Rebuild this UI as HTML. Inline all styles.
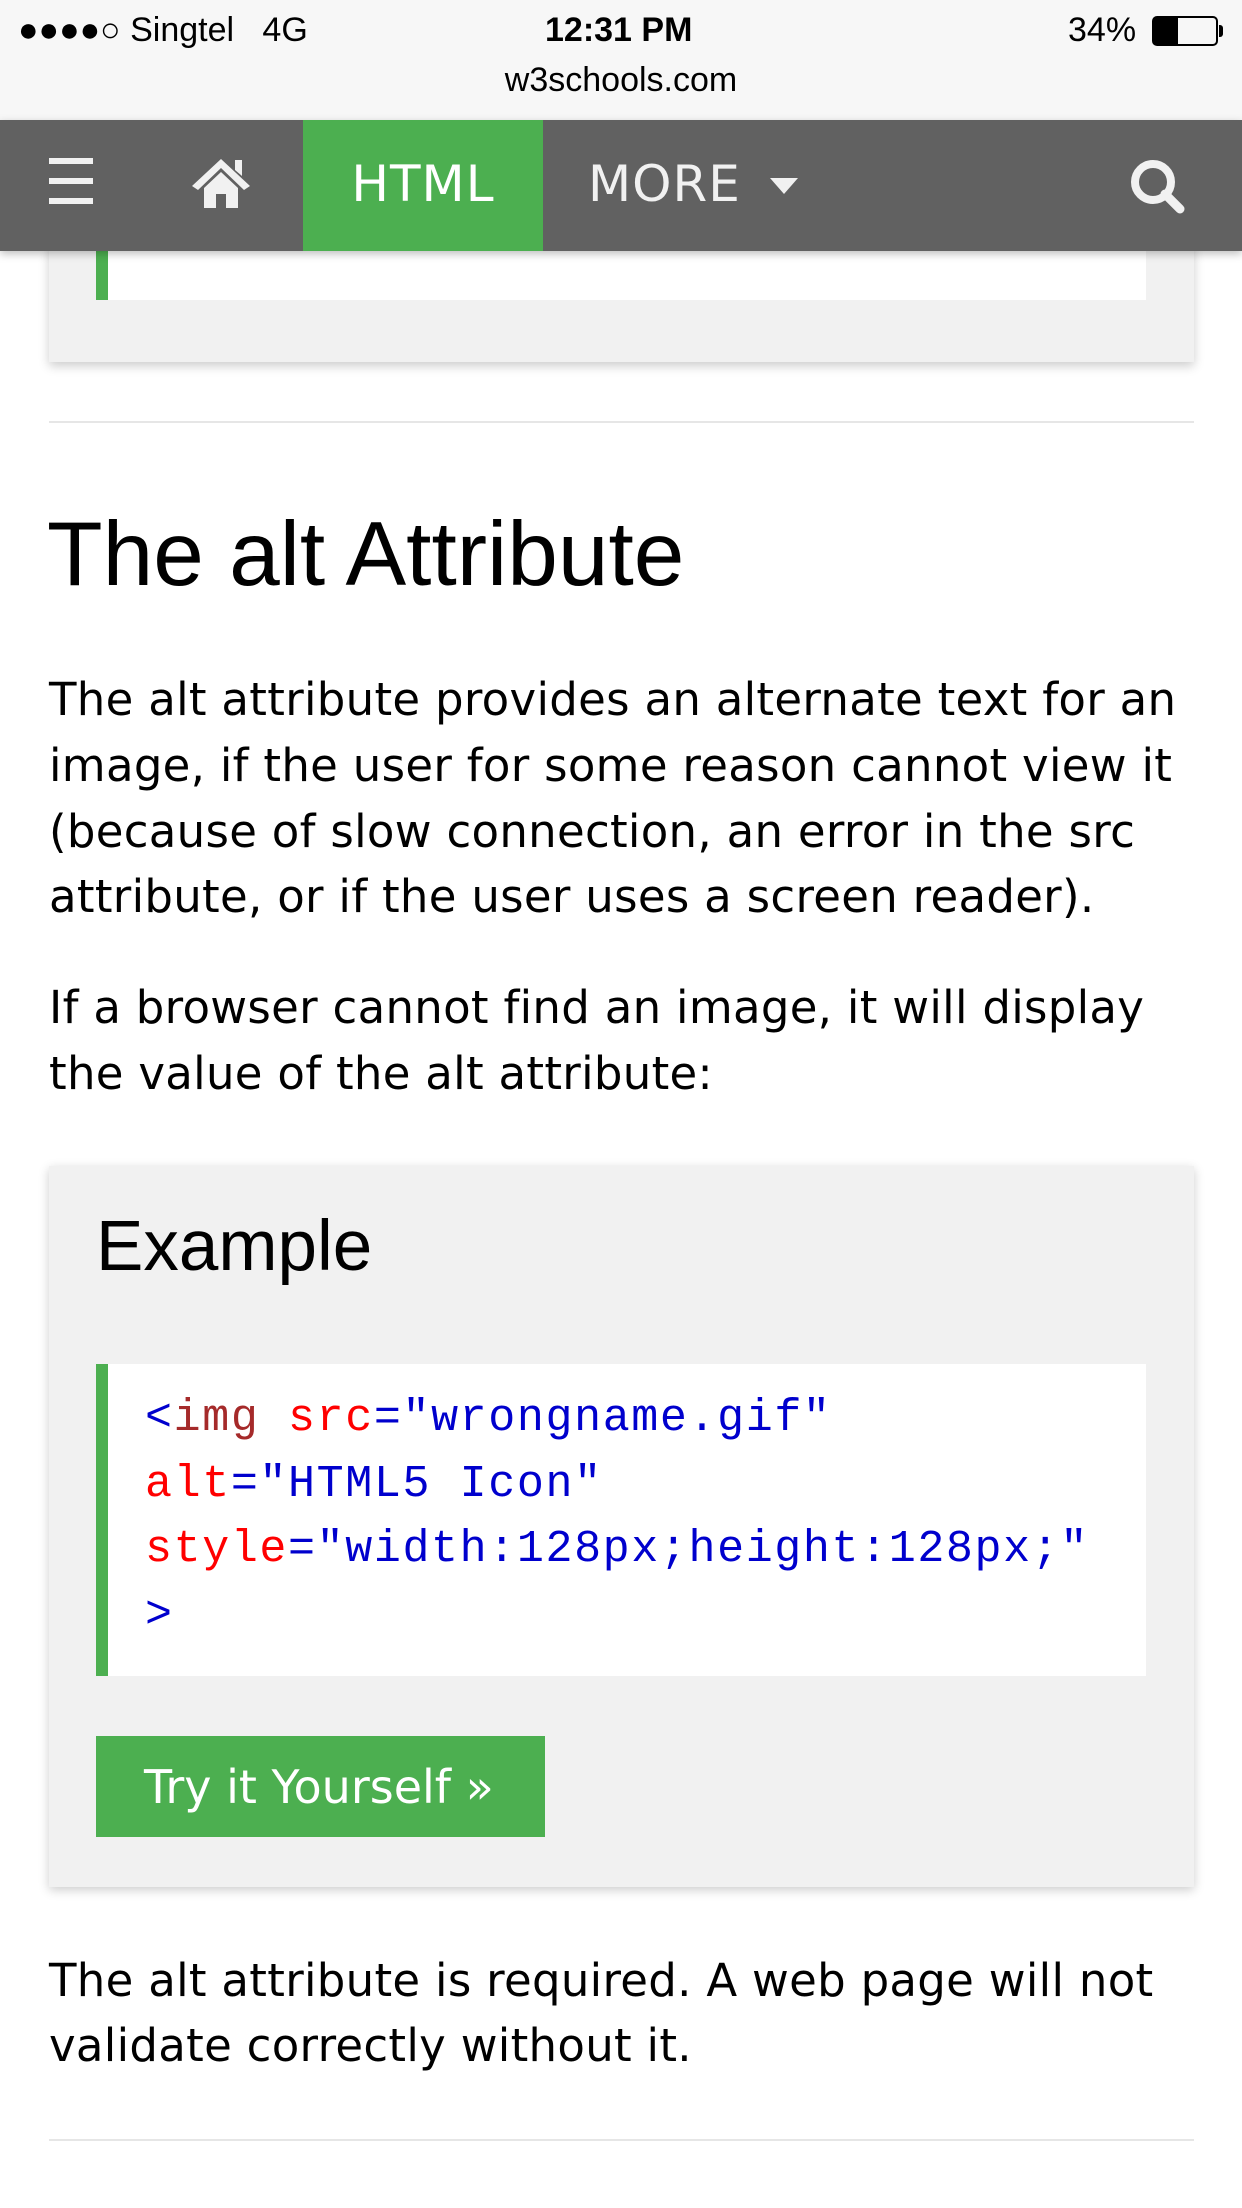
<!DOCTYPE html>
<html><head><meta charset="utf-8"><style>
*{margin:0;padding:0;box-sizing:border-box}
body{width:1242px;height:2208px;background:#fff;position:relative;overflow:hidden;font-family:"DejaVu Sans","Liberation Sans",sans-serif;color:#000}
.a{position:absolute;white-space:nowrap}
.sb{font-family:"Liberation Sans",sans-serif;font-size:34px}
.p{font-size:45px;line-height:66px;left:49px;letter-spacing:0.3px}
.code{font-family:"Liberation Mono",monospace;font-size:45px;line-height:65.5px;color:mediumblue;letter-spacing:1.6px}
.r{color:red}.br{color:brown}
</style></head><body>
<!-- status bar -->
<div class="a" style="left:0;top:0;width:1242px;height:120px;background:#f7f7f7"></div>
<div class="a sb" style="left:18px;top:11px">●●●●○ Singtel&nbsp;&nbsp; 4G</div>
<div class="a sb" style="left:545px;top:11px;font-weight:bold">12:31 PM</div>
<div class="a sb" style="left:1068px;top:11px">34%</div>
<div class="a" style="left:1152px;top:16px;width:66px;height:30px;border:2px solid #000;border-radius:5px"><div style="width:24px;height:100%;background:#000"></div></div>
<div class="a" style="left:1219px;top:25px;width:4px;height:12px;background:#000;border-radius:0 3px 3px 0"></div>
<div class="a sb" style="left:0;width:1242px;text-align:center;top:61px">w3schools.com</div>

<!-- top card remnant -->
<div class="a" style="left:49px;top:240px;width:1145px;height:122px;background:#f1f1f1;box-shadow:0 4px 10px rgba(0,0,0,.2)"></div>
<div class="a" style="left:96px;top:240px;width:1050px;height:60px;background:#fff;border-left:12px solid #4caf50"></div>

<!-- navbar -->
<div class="a" style="left:0;top:120px;width:1242px;height:131px;background:#616161;box-shadow:0 3px 8px rgba(0,0,0,.25)"></div>
<div class="a" style="left:49px;top:158px;width:44px;height:6px;background:#f1f1f1"></div>
<div class="a" style="left:49px;top:178px;width:44px;height:6px;background:#f1f1f1"></div>
<div class="a" style="left:49px;top:198px;width:44px;height:6px;background:#f1f1f1"></div>
<svg class="a" style="left:190px;top:156px" width="62" height="52" viewBox="0 0 62 52"><path d="M31 3 L2 30 L8 34 L31 12 L54 34 L60 30 Z" fill="#f1f1f1"/><path d="M45 4 h7 v16 l-7 -6z" fill="#f1f1f1"/><path d="M14 32 L31 16 L48 32 V52 H36 V38 H26 V52 H14 Z" fill="#f1f1f1"/></svg>
<div class="a" style="left:303px;top:120px;width:240px;height:131px;background:#4caf50"></div>
<div class="a" style="left:303px;top:155px;width:240px;text-align:center;font-size:50px;color:#fff;letter-spacing:1px">HTML</div>
<div class="a" style="left:588px;top:155px;font-size:50px;color:#f1f1f1;letter-spacing:1px">MORE</div>
<div class="a" style="left:770px;top:178px;width:0;height:0;border-left:14px solid transparent;border-right:14px solid transparent;border-top:16px solid #f1f1f1"></div>
<svg class="a" style="left:1128px;top:158px" width="62" height="56" viewBox="0 0 62 56"><circle cx="25" cy="24" r="18" fill="none" stroke="#f1f1f1" stroke-width="8"/><path d="M37 36 L52 51" stroke="#f1f1f1" stroke-width="9" stroke-linecap="round"/></svg>

<!-- hr -->
<div class="a" style="left:49px;top:421px;width:1145px;height:2px;background:#e6e6e6"></div>

<div class="a" style="left:47px;top:500px;font-family:'Liberation Sans',sans-serif;font-size:91px;line-height:110px">The alt Attribute</div>

<div class="a p" style="top:667px">The alt attribute provides an alternate text for an</div>
<div class="a p" style="top:733px">image, if the user for some reason cannot view it</div>
<div class="a p" style="top:799px">(because of slow connection, an error in the src</div>
<div class="a p" style="top:864px">attribute, or if the user uses a screen reader).</div>
<div class="a p" style="top:975px">If a browser cannot find an image, it will display</div>
<div class="a p" style="top:1041px">the value of the alt attribute:</div>

<!-- example card -->
<div class="a" style="left:49px;top:1166px;width:1145px;height:721px;background:#f1f1f1;box-shadow:0 3px 10px rgba(0,0,0,.2)"></div>
<div class="a" style="left:96px;top:1207px;font-family:'Liberation Sans',sans-serif;font-size:71px;line-height:80px">Example</div>
<div class="a" style="left:96px;top:1364px;width:1050px;height:312px;background:#fff;border-left:12px solid #4caf50"></div>
<div class="a code" style="left:145px;top:1386px">&lt;<span class="br">img</span><span class="r"> src</span>="wrongname.gif"</div>
<div class="a code" style="left:145px;top:1452px"><span class="r">alt</span>="HTML5 Icon"</div>
<div class="a code" style="left:145px;top:1517px"><span class="r">style</span>="width:128px;height:128px;"</div>
<div class="a code" style="left:145px;top:1583px">&gt;</div>
<div class="a" style="left:96px;top:1736px;width:449px;height:101px;background:#4caf50"></div>
<div class="a" style="left:144px;top:1760px;font-size:46px;color:#fff">Try it Yourself »</div>

<div class="a p" style="top:1948px">The alt attribute is required. A web page will not</div>
<div class="a p" style="top:2013px">validate correctly without it.</div>
<div class="a" style="left:49px;top:2139px;width:1145px;height:2px;background:#e6e6e6"></div>
</body></html>
